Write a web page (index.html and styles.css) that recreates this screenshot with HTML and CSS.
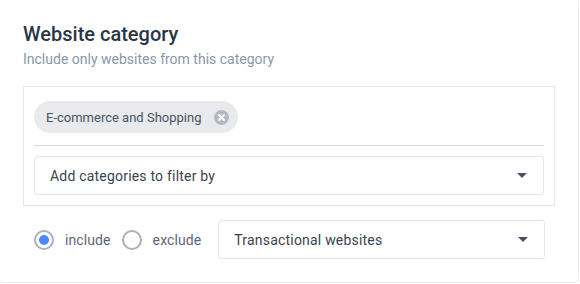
FILE: index.html
```html
<!DOCTYPE html>
<html lang="en">
<head>
    <meta charset="UTF-8">
    <title>Website category</title>
    <link rel="stylesheet" href="styles.css">
</head>
<body>

    <div class="card">
        <h2 class="card-title">Website category</h2>
        <p class="card-subtitle">Include only websites from this category</p>

        <div class="picker">
            <div class="chips">
                <span class="chip">
                    E-commerce and Shopping
                    <span class="chip-close">
                        <svg width="15" height="15" viewBox="0 0 15 15">
                            <circle cx="7.5" cy="7.5" r="7.5" fill="#b4bac4"/>
                            <path d="M5 5 L10 10 M10 5 L5 10" stroke="#fff" stroke-width="1.8" stroke-linecap="round"/>
                        </svg>
                    </span>
                </span>
            </div>
            <div class="select">
                <span>Add categories to filter by</span>
                <span class="caret"></span>
            </div>
        </div>

        <div class="filter-row">
            <label class="radio">
                <span class="radio-dot checked"></span> include
            </label>
            <label class="radio">
                <span class="radio-dot"></span> exclude
            </label>
            <div class="select select-type">
                <span>Transactional websites</span>
                <span class="caret"></span>
            </div>
        </div>
    </div>

</body>
</html>
```

FILE: styles.css
```css
body {
    margin: 0;
    background-color: #ffffff;
    font-family: Roboto, "Liberation Sans", Arial, sans-serif;
    overflow: hidden;
}
.card {
    box-sizing: border-box;
    width: 581px;
    height: 286px;
    margin: -3px 0 0 -2px;
    padding: 23px 23px 0 24px;
    border: 1px solid #e6e8ec;
    border-radius: 6px;
    background: #fff;
}
.card-title {
    margin: 0;
    font-size: 20px;
    line-height: 26px;
    font-weight: 500;
    color: #2a3647;
}
.card-subtitle {
    margin: 3px 0 0;
    font-size: 14px;
    line-height: 18px;
    color: #8b97a8;
}
.picker {
    margin-top: 18px;
    border: 1px solid #e6e6e6;
    padding: 14px 10px 10px;
}
.chips {
    display: flex;
    padding-bottom: 12px;
    border-bottom: 1px solid #d9dbde;
}
.chip {
    display: inline-flex;
    align-items: center;
    height: 32px;
    padding: 0 9px 0 12px;
    border-radius: 16px;
    background: #e8eaed;
    font-size: 13px;
    color: #4a5363;
}
.chip-close {
    display: flex;
    margin-left: 13px;
}
.select {
    display: flex;
    align-items: center;
    justify-content: space-between;
    box-sizing: border-box;
    height: 39px;
    margin-top: 10px;
    padding: 0 16px 0 15px;
    border: 1px solid #e3e5e8;
    border-radius: 3px;
    font-size: 14px;
    letter-spacing: 0.2px;
    color: #3a4452;
}
.caret {
    width: 0;
    height: 0;
    border-left: 5px solid transparent;
    border-right: 5px solid transparent;
    border-top: 5px solid #4a5363;
}
.filter-row {
    display: flex;
    align-items: center;
    margin-top: 14px;
    padding-left: 11px;
}
.radio {
    display: flex;
    align-items: center;
    gap: 11px;
    margin-right: 11px;
    font-size: 14px;
    letter-spacing: 0.1px;
    color: #5d6878;
}
.radio-dot {
    box-sizing: border-box;
    width: 20px;
    height: 20px;
    border: 2px solid #a9b0ba;
    border-radius: 50%;
    position: relative;
}
.radio-dot.checked::after {
    content: "";
    position: absolute;
    left: 3px;
    top: 3px;
    width: 10px;
    height: 10px;
    border-radius: 50%;
    background: #4b8bf5;
}
.select-type {
    flex: 1;
    margin: 0 10px 0 6px;
    height: 39px;
}
```
